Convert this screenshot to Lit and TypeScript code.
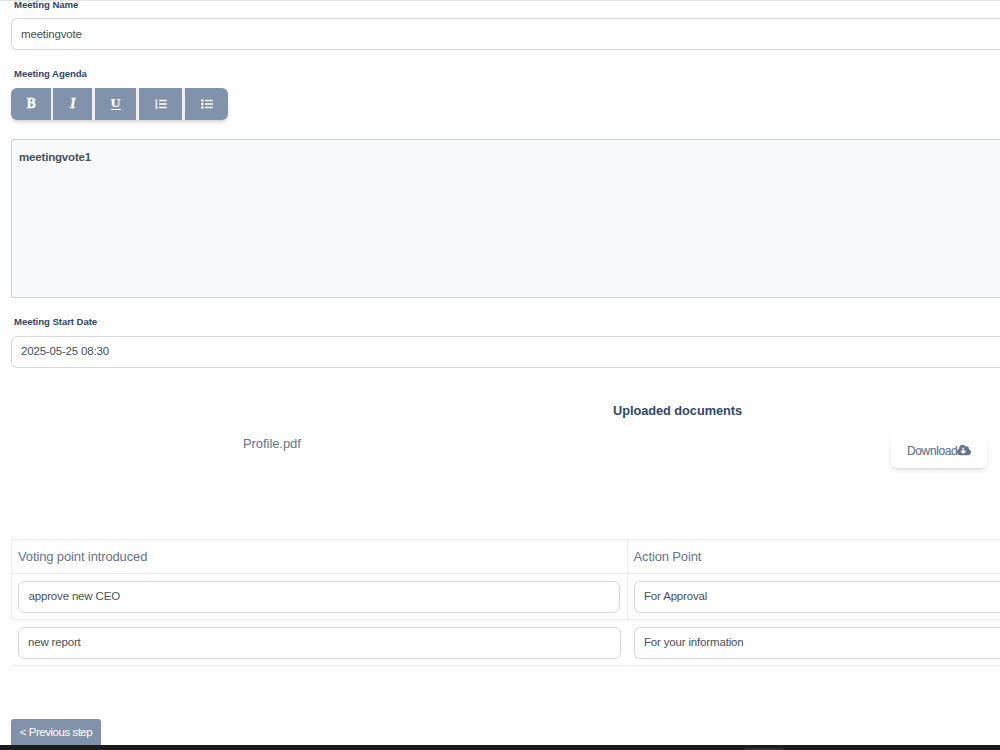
import { LitElement, html, css, svg } from "lit";
import { customElement } from "lit/decorators.js";

const orderedIcon = svg`<svg width="12" height="10" viewBox="0 0 12 10" fill="none" stroke="#fff">
  <path d="M4 1.5h7.8M4 5h7.8M4 8.5h7.8" stroke-width="1.7"/>
  <path d="M.4 .5h1v2.4M.2 3h2.3M.4 4.3h1.5v.8L.5 6.1h1.8M.3 7.3h1.7v2.1H.3M.8 8.3h1.1" stroke-width=".9"/>
</svg>`;
const bulletIcon = svg`<svg width="12" height="10" viewBox="0 0 12 10" fill="#fff">
  <path d="M4 .65h7.9v1.7H4zM4 4.150h7.9v1.7H4zM4 7.65h7.9v1.7H4z"/>
  <circle cx="1.4" cy="1.5" r="1.3"/><circle cx="1.4" cy="5" r="1.3"/><circle cx="1.4" cy="8.5" r="1.3"/>
</svg>`;
const cloudIcon = svg`<svg width="14" height="12" viewBox="0 0 640 512" preserveAspectRatio="none" fill="#67748e">
  <path d="M537.6 226.600c4.100-10.700 6.400-22.400 6.400-34.600 0-53-43-96-96-96-19.700 0-38.100 6-53.300 16.200C367 64.200 315.300 32 256 32c-88.400 0-160 71.600-160 160 0 2.700.1 5.400.2 8.100C40.200 219.800 0 273.200 0 336c0 79.500 64.500 144 144 144h368c70.700 0 128-57.300 128-128 0-61.900-44-113.600-102.400-125.400zm-132.900 88.700L299.300 420.700c-6.200 6.200-16.400 6.200-22.600 0L171.300 315.300c-10.100-10.100-2.900-27.300 11.300-27.300H248V176c0-8.800 7.200-16 16-16h48c8.800 0 16 7.200 16 16v112h65.400c14.200 0 21.400 17.200 11.300 27.300z"/>
</svg>`;

@customElement("app-root")
export class AppRoot extends LitElement {
  static styles = css`
    :host { display: block; width: 1000px; height: 750px; overflow: hidden; background: #fefefe;
      font: 11.5px/16px "Liberation Sans", Arial, sans-serif; letter-spacing: -.17px; color: #495057; }
    * { box-sizing: border-box; }
    .page { height: 750px; display: flex; flex-direction: column; border-top: 1px solid #e2e3e4; }
    .content { height: 744px; flex: none; padding-left: 11px; display: flex; flex-direction: column; }
    .label { padding-left: 3px; height: 12px; flex: none; font-size: 9.6px; line-height: 12px; letter-spacing: -.06px; font-weight: 700; color: #344767; white-space: nowrap; }
    .name { height: 9px; line-height: 7px; }
    .agenda { margin-top: 18px; }
    .date { margin-top: 18px; }
    .field { height: 32px; flex: none; border: 1px solid #d5d9dd; border-radius: 6px; background: #fff; padding: 0 9px; line-height: 31px; white-space: nowrap; }
    .open { border-right: 0; border-radius: 6px 0 0 6px; }
    .name + .field { margin-top: 8px; }
    .date + .field { margin-top: 8px; line-height: 28px; letter-spacing: -.18px; }
    .tools { display: flex; height: 32px; width: 217px; margin-top: 8px; flex: none; border-radius: 6px; box-shadow: 0 3px 5px -1px rgba(0,0,0,.13), 0 2px 3px -1px rgba(0,0,0,.08); background: #eff0f3; overflow: hidden; }
    .tool { flex: none; background: #8392ab; color: #fff; display: flex; align-items: center; justify-content: center; font: 700 12.5px/12px "DejaVu Serif", serif; letter-spacing: 0; }
    .tool svg { display: block; margin-top: -1px; }
    .b { width: 40px; } .i { width: 39px; margin-left: 2px; } .u { width: 41px; margin-left: 3px; } .l { width: 43px; margin-left: 3px; } .m { width: 43px; margin-left: 3px; }
    .bold, .italic { display: block; -webkit-text-stroke: .3px #fff; transform: scaleX(.9); }
    .italic { font-style: italic; }
    .under { display: block; border-bottom: 1px solid #fff; width: 10px; display: flex; justify-content: center; height: 12px; line-height: 10px; font-size: 11.5px; -webkit-text-stroke: .2px #fff; margin-top: -1px; }
    .editor { margin-top: 19px; height: 159px; flex: none; border: 1px solid #ced1d5; border-right: 0; border-radius: 3px 0 0 3px; background: #f8f9fa; padding: 9px 7px; font-weight: 700; letter-spacing: -.18px; }
    .docs { height: 171px; flex: none; display: grid; grid-template-columns: 232px 370px 278px 96px; grid-template-rows: 66px 34px; color: #67748e; letter-spacing: 0; }
    .title { grid-column: 3; grid-row: 1; padding-top: 35px; font-size: 12.8px; letter-spacing: -.06px; font-weight: 700; color: #344767; white-space: nowrap; }
    .file { grid-column: 2; grid-row: 2; font-size: 13px; padding-top: 2px; letter-spacing: -.07px; }
    .download { grid-column: 4; grid-row: 2; display: flex; align-items: center; padding-left: 16px; background: #fff; border-radius: 6px; box-shadow: 0 3px 5px -1px rgba(0,0,0,.1), 0 2px 3px -1px rgba(0,0,0,.07); font-size: 12px; letter-spacing: -.37px; -webkit-text-stroke: .15px #67748e; }
    .download svg { margin-top: -2px; }
    .table { flex: none; display: grid; grid-template-columns: 616px 373px; grid-template-rows: 34px 46px 46px; border-top: 1px solid #e9ecef; }
    .cell { border-left: 1px solid #e9ecef; border-bottom: 1px solid #e9ecef; padding: 7px 7px 0 6px; }
    .head { font-size: 13px; letter-spacing: -.13px; line-height: 19px; color: #67748e; }
    .last { border-left-color: transparent; padding-right: 6px; }
    .right { padding-right: 0; padding-left: 5px; }
    .cell.right { padding-left: 5.5px; }
    .cell .field { padding-left: 9.5px; line-height: 29px; }
    .last .field { padding-left: 9px; }
    .cell.right .field { padding-left: 9.5px; }
    .prev { margin-top: 53px; width: 90px; height: 26px; flex: none; border-radius: 3px 3px 0 0; background: #8392ab; color: #fff; text-align: center; line-height: 27px; font-size: 11.5px; letter-spacing: -.48px; white-space: nowrap; }
    .taskbar { height: 5px; flex: none; background: #1c1c1c; padding: 3px 0 0 744px; }
    .active { width: 40px; height: 2px; background: #303030; border-radius: 3px 3px 0 0; }
  `;

  render() {
    return html`<main class="page">
      <div class="content">
        <div class="label name">Meeting Name</div>
        <div class="field open">meetingvote</div>
        <div class="label agenda">Meeting Agenda</div>
        <div class="tools">
          <div class="tool b"><span class="bold">B</span></div>
          <div class="tool i"><span class="italic">I</span></div>
          <div class="tool u"><span class="under">U</span></div>
          <div class="tool l">${orderedIcon}</div>
          <div class="tool m">${bulletIcon}</div>
        </div>
        <div class="editor">meetingvote1</div>
        <div class="label date">Meeting Start Date</div>
        <div class="field open">2025-05-25 08:30</div>
        <div class="docs">
          <div class="title">Uploaded documents</div>
          <div class="file">Profile.pdf</div>
          <div class="download"><span>Download</span>${cloudIcon}</div>
        </div>
        <div class="table">
          <div class="cell head">Voting point introduced</div>
          <div class="cell head right">Action Point</div>
          <div class="cell"><div class="field">approve new CEO</div></div>
          <div class="cell right"><div class="field open">For Approval</div></div>
          <div class="cell last"><div class="field">new report</div></div>
          <div class="cell last right"><div class="field open">For your information</div></div>
        </div>
        <div class="prev">&lt; Previous step</div>
      </div>
      <div class="taskbar"><div class="active"></div></div>
    </main>`;
  }
}
